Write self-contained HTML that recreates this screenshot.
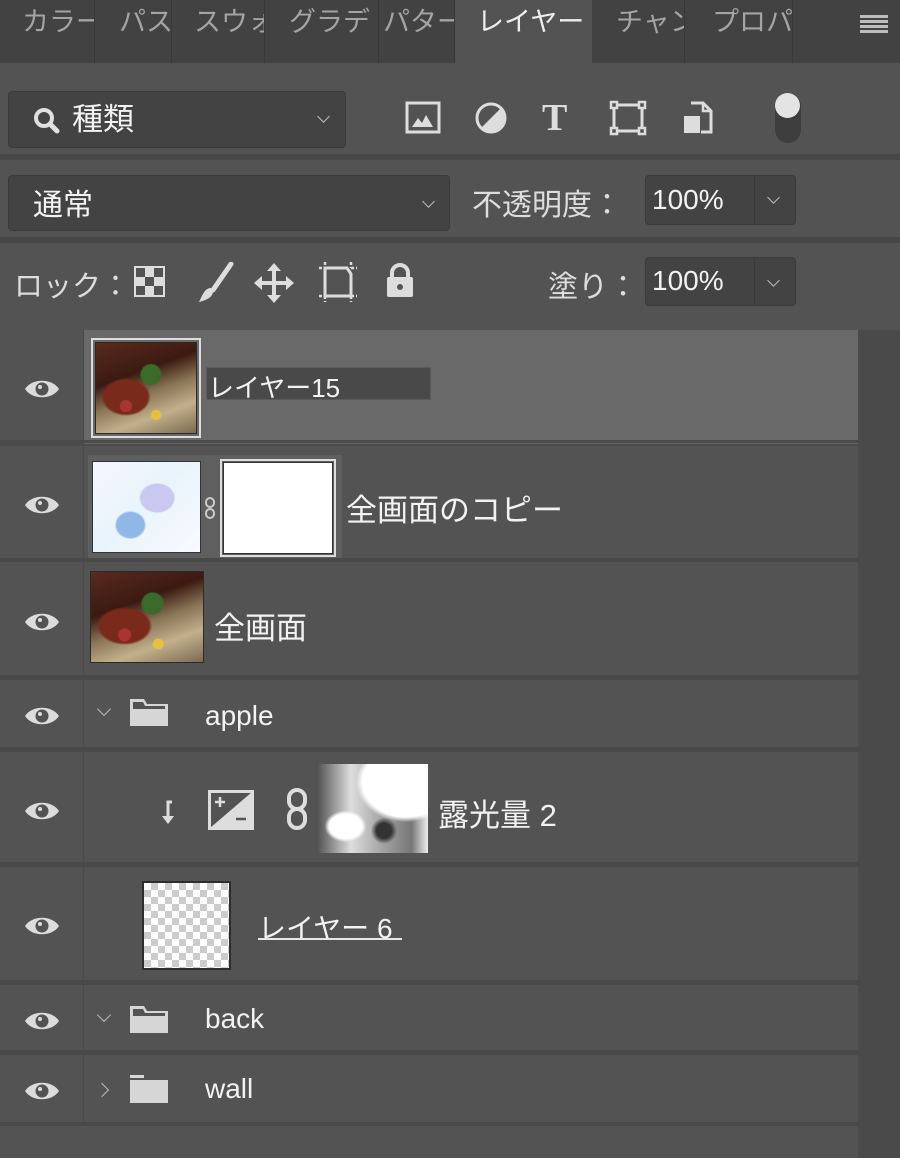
<!DOCTYPE html>
<html><head><meta charset="utf-8"><style>
*{margin:0;padding:0;box-sizing:border-box}
body{width:900px;height:1158px;background:#535353;position:relative;overflow:hidden;font-family:"Liberation Sans","Noto Sans CJK JP",sans-serif;color:#e6e6e6}
.a{position:absolute}
.tab{position:absolute;top:0;height:63px;border-right:1px solid #383838;color:#a4a4a4;font-size:27px;line-height:44px;overflow:hidden;white-space:nowrap;padding-left:22px}
.box{position:absolute;background:#434343;border:1px solid #3b3b3b;border-radius:4px}
.sep{position:absolute;left:0;width:858px;background:#494949}
.eye{position:absolute;left:24px;width:36px;height:22px}
.txt{position:absolute;font-size:29px;color:#f2f2f2;white-space:nowrap}
.photo{position:absolute;background:
radial-gradient(circle at 30% 70%,#a33 0 6%,transparent 7%),
radial-gradient(circle at 60% 80%,#e7c040 0 5%,transparent 6%),
radial-gradient(circle at 55% 35%,#3a6b2a 0 12%,transparent 14%),
radial-gradient(ellipse at 30% 60%,#7a2a1a 0 22%,transparent 25%),
linear-gradient(160deg,#5a2a1e 0%,#3b1a12 35%,#8a7556 55%,#c2b08c 75%,#7b6a50 100%);border:1px solid #2a2a2a}
.chev{position:absolute;width:12px;height:12px;border-right:1.5px solid #bbb;border-bottom:1.5px solid #bbb;transform:rotate(45deg)}
.folder{position:absolute;width:40px;height:30px}
</style></head><body>
<!-- tabs -->
<div class="a" style="left:0;top:0;width:900px;height:63px;background:#424242"></div>
<div class="tab" style="left:0;width:95px">カラー</div>
<div class="tab" style="left:95px;width:77px;padding-left:24px">パス</div>
<div class="tab" style="left:172px;width:93px">スウォ</div>
<div class="tab" style="left:265px;width:114px;padding-left:24px">グラデ</div>
<div class="tab" style="left:379px;width:76px;padding-left:4px">パター</div>
<div class="a" style="left:455px;top:0;width:137px;height:66px;background:#535353;color:#eee;font-size:27px;line-height:44px;padding-left:22px">レイヤー</div>
<div class="tab" style="left:598px;width:87px;padding-left:18px">チャン</div>
<div class="tab" style="left:685px;width:108px;padding-left:27px">プロパ:</div>
<div class="a" style="left:860px;top:15px;width:28px;height:20px;background:repeating-linear-gradient(#bdbdbd 0 3px,transparent 3px 5px)"></div>

<!-- filter row -->
<div class="box" style="left:8px;top:91px;width:338px;height:57px"></div>
<svg class="a" style="left:32px;top:105px" width="32" height="32" viewBox="0 0 32 32"><circle cx="12" cy="13" r="8" fill="none" stroke="#e0e0e0" stroke-width="4"/><path d="M18 19l7 7" stroke="#e0e0e0" stroke-width="5" stroke-linecap="round"/></svg>
<div class="txt" style="left:72px;top:94px;font-size:31px">種類</div>
<div class="chev" style="left:319px;top:112px;width:9px;height:9px;border-width:1.5px"></div>
<svg class="a" style="left:405px;top:101px" width="36" height="33" viewBox="0 0 36 33"><rect x="2" y="2" width="32" height="29" fill="none" stroke="#ddd" stroke-width="3"/><path d="M7 26l6-9 4 5 4-8 7 12z" fill="#ddd"/></svg>
<svg class="a" style="left:474px;top:101px" width="34" height="34" viewBox="0 0 34 34"><circle cx="17" cy="17" r="14" fill="none" stroke="#ddd" stroke-width="3"/><path d="M27 7A14 14 0 0 1 7 27z" fill="#ddd"/></svg>
<div class="a" style="left:542px;top:96px;font-family:'Liberation Serif',serif;font-weight:bold;font-size:38px;color:#ddd">T</div>
<svg class="a" style="left:609px;top:100px" width="38" height="36" viewBox="0 0 38 36"><rect x="5" y="5" width="28" height="26" fill="none" stroke="#ddd" stroke-width="3"/><g fill="#535353" stroke="#ddd" stroke-width="2.5"><rect x="2" y="2" width="6" height="6"/><rect x="30" y="2" width="6" height="6"/><rect x="2" y="28" width="6" height="6"/><rect x="30" y="28" width="6" height="6"/></g></svg>
<svg class="a" style="left:682px;top:101px" width="32" height="34" viewBox="0 0 32 34"><path d="M9 2h12l8 8v21H19" fill="none" stroke="#ddd" stroke-width="3"/><path d="M21 2v8h8" fill="none" stroke="#ddd" stroke-width="2.5"/><rect x="2" y="15" width="16" height="17" fill="#ddd"/></svg>
<div class="a" style="left:775px;top:93px;width:26px;height:50px;border-radius:13px;background:#3e3e3e"></div>
<div class="a" style="left:775px;top:93px;width:25px;height:25px;border-radius:50%;background:#e4e4e4"></div>
<div class="a" style="left:0;top:154px;width:900px;height:6px;background:#474747"></div>

<!-- blend row -->
<div class="box" style="left:8px;top:175px;width:442px;height:56px"></div>
<div class="txt" style="left:33px;top:180px;font-size:30px">通常</div>
<div class="chev" style="left:424px;top:197px;width:9px;height:9px"></div>
<div class="txt" style="left:472px;top:180px;font-size:30px;color:#ddd">不透明度：</div>
<div class="box" style="left:645px;top:175px;width:151px;height:50px"></div>
<div class="a" style="left:754px;top:176px;width:1px;height:48px;background:#3a3a3a"></div>
<div class="txt" style="left:652px;top:184px;font-size:28px">100%</div>
<div class="chev" style="left:769px;top:193px;width:9px;height:9px"></div>
<div class="a" style="left:0;top:237px;width:900px;height:6px;background:#474747"></div>

<!-- lock row -->
<div class="txt" style="left:14px;top:263px;font-size:29px;color:#ddd">ロック：</div>
<div class="a" style="left:134px;top:266px;width:31px;height:31px;border:2px solid #ddd;background:conic-gradient(#ddd 25%,#535353 0 50%,#ddd 0 75%,#535353 0) 0 0/18px 18px"></div>
<svg class="a" style="left:195px;top:262px" width="40" height="42" viewBox="0 0 40 42"><path d="M36 2L18 28" stroke="#ddd" stroke-width="5" stroke-linecap="round"/><path d="M16 26c-6 0-8 6-12 14 8-2 14-5 14-11z" fill="#ddd"/></svg>
<svg class="a" style="left:254px;top:263px" width="40" height="40" viewBox="0 0 40 40"><path d="M20 4v32M4 20h32" stroke="#ddd" stroke-width="4"/><path d="M20 0l7 8H13zM20 40l7-8H13zM0 20l8-7v14zM40 20l-8-7v14z" fill="#ddd"/></svg>
<svg class="a" style="left:317px;top:262px" width="42" height="40" viewBox="0 0 42 40"><path d="M8 6h22l4 6v22H8z" fill="none" stroke="#ddd" stroke-width="3"/><path d="M2 6h6M34 6h6M2 34h6M34 34h6M8 0v6M34 0v6M8 34v6M34 34v6" stroke="#ddd" stroke-width="2.5" stroke-dasharray="3 2"/></svg>
<svg class="a" style="left:385px;top:263px" width="30" height="36" viewBox="0 0 30 36"><path d="M7 15v-5a8 8 0 0 1 16 0v5" fill="none" stroke="#ddd" stroke-width="4"/><rect x="2" y="14" width="26" height="20" rx="2" fill="#ddd"/><circle cx="15" cy="24" r="3" fill="#535353"/></svg>
<div class="txt" style="left:548px;top:262px;font-size:30px;color:#ddd">塗り：</div>
<div class="box" style="left:645px;top:257px;width:151px;height:49px"></div>
<div class="a" style="left:754px;top:258px;width:1px;height:47px;background:#3a3a3a"></div>
<div class="txt" style="left:652px;top:265px;font-size:28px">100%</div>
<div class="chev" style="left:769px;top:276px;width:9px;height:9px"></div>

<!-- layers area -->
<div class="a" style="left:858px;top:330px;width:42px;height:828px;background:#4a4a4a"></div>
<div class="a" style="left:83px;top:330px;width:775px;height:110px;background:#696969"></div>
<div class="a" style="left:83px;top:330px;width:1px;height:795px;background:#4a4a4a"></div>
<div class="sep" style="top:440px;height:6px;background:#4b4b4b"></div>
<div class="a" style="left:84px;top:443px;width:774px;height:1px;background:#666"></div>
<div class="sep" style="top:558px;height:4px"></div>
<div class="sep" style="top:675px;height:5px"></div>
<div class="sep" style="top:747px;height:5px"></div>
<div class="sep" style="top:862px;height:5px"></div>
<div class="sep" style="top:980px;height:5px"></div>
<div class="sep" style="top:1050px;height:5px"></div>
<div class="sep" style="top:1122px;height:4px"></div>

<!-- eyes -->
<svg width="0" height="0" style="position:absolute"><defs><g id="e"><path d="M1 11C8 0 28 0 35 11 28 22 8 22 1 11z" fill="#dcdcdc"/><circle cx="18" cy="11" r="6.5" fill="#535353"/><circle cx="16" cy="9" r="2" fill="#dcdcdc"/></g></defs></svg>
<svg class="eye" style="top:378px"><use href="#e"/></svg>
<svg class="eye" style="top:494px"><use href="#e"/></svg>
<svg class="eye" style="top:611px"><use href="#e"/></svg>
<svg class="eye" style="top:705px"><use href="#e"/></svg>
<svg class="eye" style="top:800px"><use href="#e"/></svg>
<svg class="eye" style="top:915px"><use href="#e"/></svg>
<svg class="eye" style="top:1010px"><use href="#e"/></svg>
<svg class="eye" style="top:1080px"><use href="#e"/></svg>

<!-- layer 15 -->
<div class="a" style="left:91px;top:338px;width:110px;height:100px;border:2px solid #ddd"></div>
<div class="photo" style="left:95px;top:342px;width:102px;height:92px"></div>
<div class="a" style="left:206px;top:367px;width:225px;height:33px;background:#494949;border:1px solid #5a5a5a"></div>
<div class="txt" style="left:208px;top:368px;font-size:26px">レイヤー15</div>

<!-- copy -->
<div class="a" style="left:88px;top:455px;width:254px;height:103px;background:#5f5f5f"></div>
<div class="a" style="left:92px;top:461px;width:109px;height:92px;border:1px solid #333;background:
radial-gradient(ellipse at 35% 70%,#8fb8e8 0 14%,transparent 16%),
radial-gradient(ellipse at 60% 40%,#c8c8f0 0 18%,transparent 20%),
linear-gradient(135deg,#f4f6ff,#e8f4fb 50%,#fafaff)"></div>
<svg class="a" style="left:204px;top:496px" width="12" height="24" viewBox="0 0 12 24"><rect x="2" y="2" width="8" height="9" rx="4" fill="none" stroke="#ccc" stroke-width="2"/><rect x="2" y="13" width="8" height="9" rx="4" fill="none" stroke="#ccc" stroke-width="2"/></svg>
<div class="a" style="left:220px;top:459px;width:116px;height:98px;border:2px solid #ddd"></div>
<div class="a" style="left:223px;top:462px;width:110px;height:92px;background:#fff;border:1px solid #333"></div>
<div class="txt" style="left:346px;top:485px;font-size:31px">全画面のコピー</div>

<!-- full -->
<div class="photo" style="left:90px;top:571px;width:114px;height:92px"></div>
<div class="txt" style="left:214px;top:603px;font-size:31px">全画面</div>

<!-- apple -->
<div class="chev" style="left:99px;top:704px;width:10px;height:10px;border-width:1px"></div>
<svg class="folder" style="left:129px;top:697px" viewBox="0 0 40 30"><path d="M1 2h14l3 5h21v22H1z" fill="#d6d6d6"/><path d="M4 5h10l2 4h20v3H4z" fill="#535353"/></svg>
<div class="txt" style="left:205px;top:700px;font-size:28px">apple</div>

<!-- exposure -->
<svg class="a" style="left:160px;top:798px" width="20" height="28" viewBox="0 0 20 28"><path d="M12 4h-4v16" fill="none" stroke="#ddd" stroke-width="3"/><path d="M2 18l6 8 6-8z" fill="#ddd"/></svg>
<svg class="a" style="left:208px;top:790px" width="46" height="40" viewBox="0 0 46 40"><rect x="1.5" y="1.5" width="43" height="37" fill="#535353" stroke="#ddd" stroke-width="3"/><path d="M44 2L2 38h42z" fill="#ddd"/><path d="M7 12h10M12 7v10" stroke="#ddd" stroke-width="2.5"/><path d="M28 29h10" stroke="#535353" stroke-width="2.5"/></svg>
<svg class="a" style="left:286px;top:787px" width="22" height="44" viewBox="0 0 22 44"><rect x="3" y="3" width="16" height="19" rx="8" fill="none" stroke="#ddd" stroke-width="4"/><rect x="3" y="22" width="16" height="19" rx="8" fill="none" stroke="#ddd" stroke-width="4"/></svg>
<div class="a" style="left:318px;top:764px;width:110px;height:89px;background:
radial-gradient(ellipse at 25% 70%,#fff 0 14%,transparent 18%),
radial-gradient(ellipse at 60% 75%,#333 0 8%,transparent 14%),
radial-gradient(ellipse at 80% 20%,#fff 0 35%,transparent 40%),
linear-gradient(90deg,#555,#ddd 30%,#aaa 55%,#777 85%,#eee)"></div>
<div class="txt" style="left:438px;top:790px;font-size:31px">露光量 2</div>

<!-- layer 6 -->
<div class="a" style="left:142px;top:881px;width:89px;height:89px;border:2px solid #2d2d2d;background:conic-gradient(#ccc 25%,#fff 0 50%,#ccc 0 75%,#fff 0) 0 0/14px 14px"></div>
<div class="txt" style="left:258px;top:907px;font-size:28px">レイヤー 6</div>
<div class="a" style="left:258px;top:938px;width:144px;height:2px;background:#e6e6e6"></div>

<!-- back -->
<div class="chev" style="left:99px;top:1010px;width:10px;height:10px;border-width:1px"></div>
<svg class="folder" style="left:129px;top:1004px" viewBox="0 0 40 30"><path d="M1 2h14l3 5h21v22H1z" fill="#d6d6d6"/><path d="M4 5h10l2 4h20v3H4z" fill="#535353"/></svg>
<div class="txt" style="left:205px;top:1003px;font-size:28px">back</div>

<!-- wall -->
<div class="a" style="left:97px;top:1085px;width:10px;height:10px;border-right:1px solid #bbb;border-top:1px solid #bbb;transform:rotate(45deg)"></div>
<svg class="folder" style="left:129px;top:1074px" viewBox="0 0 40 30"><path d="M1 1h14v3h24v25H1z" fill="#d6d6d6"/><path d="M1 4h38v2H1z" fill="#535353"/></svg>
<div class="txt" style="left:205px;top:1073px;font-size:28px">wall</div>
</body></html>
